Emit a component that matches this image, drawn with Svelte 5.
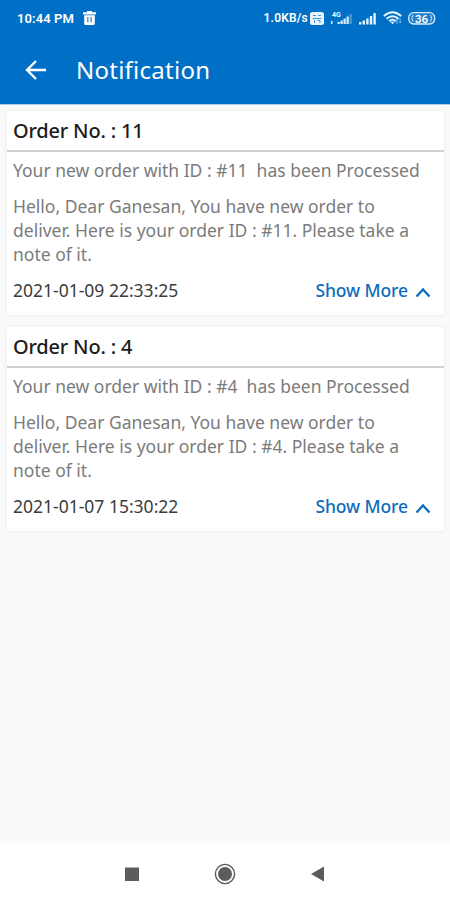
<script>
	let notifications = [
		{ id: 11, date: '2021-01-09 22:33:25' },
		{ id: 4, date: '2021-01-07 15:30:22' }
	];
</script>

<div class="screen">
	<header>
		<div class="status">
			<div class="status-left">
				<span class="clock">10:44 PM</span>
				<svg class="trash" width="13" height="14" viewBox="0 0 13 14">
					<path fill="#fff" fill-rule="evenodd" d="M4 0h5v1.2h4v2.3H0V1.2h4zM1.2 4.2h10.6v8.3q0 1.5-1.5 1.5H2.7q-1.5 0-1.5-1.5zM4.3 6v5.3h1.1V6zM7.6 6v5.3h1.1V6z" />
				</svg>
			</div>
			<div class="status-right">
				<span class="speed">1.0KB/s</span>
				<svg width="14" height="13" viewBox="0 0 14 13">
					<rect width="14" height="13" rx="2.5" fill="#e7f3fd" />
					<path fill="none" stroke="#3f95d9" d="M3 3.5h3M8 3.5h3M2.5 6.5h9M4.5 8v3M7.5 8.5H10V11" />
				</svg>
				<svg class="signal-4g" width="23" height="14" viewBox="0 0 23 14">
					<text x="1" y="5.8" font-size="7">4G</text>
					<path fill="#d9ecfb" d="M0 10h1.5v3H0zM6.5 11h2.3v2H6.5zM9.5 9.5h2.3V13H9.5zM12.5 7.5h2.3V13h-2.3zM15.5 5.5h2.3V13h-2.3z" />
					<path fill="#4a9ada" d="M18.5 3h2.3v10h-2.3z" />
				</svg>
				<svg class="signal" width="18" height="13" viewBox="0 0 18 13">
					<path fill="#e7f3fd" d="M0 10h2.4v2.5H0zM3.6 8.5H6v4H3.6zM7.2 6.5h2.4v6H7.2zM10.8 4h2.4v8.5h-2.4zM14.4 1h2.4v11.5h-2.4z" />
				</svg>
				<svg class="wifi" width="20" height="14" viewBox="0 0 20 14">
					<g fill="none" stroke="#e7f3fd" stroke-width="1.9">
						<path d="M.8 5Q9.5-2.7 18.2 5M3.5 7.8q6-5.2 12 0M6.2 10.2q3.3-3 6.6 0" />
					</g>
					<path fill="#e7f3fd" d="M7.2 10.8h4.6L9.5 13.3z" />
					<path fill="none" stroke="#8cc0e9" d="M14 8v5M12.5 9.5L14 8M17 7v5l1.5-1.5" />
				</svg>
				<svg class="battery" width="28" height="13" viewBox="0 0 28 13">
					<rect x=".7" y=".7" width="26" height="11.3" rx="5" fill="#1f80cd" stroke="#d5e9f9" stroke-width="1.3" />
					<path fill="none" stroke="#d5e9f9" d="M5 3q-2.5 3.3 0 6.6M22.5 3q2.5 3.3 0 6.6" />
					<text x="7" y="10.5" font-size="11.5">36</text>
				</svg>
			</div>
		</div>
		<div class="toolbar">
			<svg class="back" width="22" height="20" viewBox="0 0 22 20">
				<path fill="none" stroke="#fff" stroke-width="2.4" d="M21 10H2.2M11 1L2 10l9 9" />
			</svg>
			<h1>Notification</h1>
		</div>
	</header>

	<main>
		{#each notifications as item}
			<section class="card">
				<h2>Order No. : {item.id}</h2>
				<div class="content">
					<p class="summary">Your new order with ID : #{item.id}&nbsp; has been Processed</p>
					<p class="message">Hello, Dear Ganesan, You have new order to deliver. Here is your order ID : #{item.id}. Please take a note of it.</p>
					<div class="footer">
						<span class="date">{item.date}</span>
						<button>
							Show More
							<svg width="16" height="11" viewBox="0 0 16 11">
								<path fill="none" stroke="#0d6dbb" stroke-width="2.3" d="M1.5 9.5L8 2.5l6.5 7" />
							</svg>
						</button>
					</div>
				</div>
			</section>
		{/each}
	</main>

	<nav>
		<svg width="14" height="14" viewBox="0 0 14 14"><path fill="#5c5c5c" d="M0 .5h14V14H0z" /></svg>
		<svg width="22" height="22" viewBox="0 0 22 22">
			<circle cx="11" cy="11" r="9.6" fill="#fff" stroke="#5c5c5c" stroke-width="1.4" />
			<circle cx="11" cy="11" r="7" fill="#5c5c5c" />
		</svg>
		<svg width="13" height="16" viewBox="0 0 13 16"><path fill="#5c5c5c" d="M13 .5v15L0 8z" /></svg>
	</nav>
</div>

<style>
:global(body) {
	margin: 0;
}
.screen {
	display: flex;
	flex-direction: column;
	height: 900px;
	background: #fafafa;
	font-family: "Noto Sans", sans-serif;
}
header {
	height: 104px;
	background: #0070c6;
	border-bottom: 1px solid #a9cdea;
	color: #fff;
	flex: none;
}
.status {
	display: flex;
	justify-content: space-between;
	height: 36px;
	padding: 0 14px 0 17px;
	font-family: Roboto, sans-serif;
	font-weight: 600;
}
.status-left,
.status-right {
	display: flex;
	align-items: center;
}
.clock {
	font-size: 13px;
	letter-spacing: 0.1px;
}
.trash {
	margin-left: 9px;
}
.speed {
	margin-right: 2px;
	font-size: 12px;
	letter-spacing: 0.2px;
}
.signal-4g {
	margin-left: 7px;
}
.signal {
	margin-left: 5px;
}
.wifi {
	margin-left: 6px;
}
.battery {
	margin-left: 5px;
}
.status text {
	fill: #fff;
}
.toolbar {
	display: flex;
	align-items: center;
	height: 68px;
	padding-left: 25px;
}
h1 {
	margin: -1px 0 0 29px;
	font-size: 24px;
	font-weight: 400;
	letter-spacing: 0.25px;
}
main {
	flex: 1;
	display: flex;
	flex-direction: column;
	gap: 12px;
	padding: 6px 6px 0 7px;
}
.card {
	height: 204px;
	background: #fff;
	border-radius: 3px;
	box-shadow: 0 0 3px 2px #f3f3f3;
}
h2 {
	height: 39px;
	margin: 0;
	padding-left: 6px;
	border-bottom: 2px solid #d2d2d2;
	color: #1c1c1c;
	font-size: 20px;
	font-weight: 500;
	line-height: 40px;
	letter-spacing: -0.2px;
}
.content {
	padding: 6px 6px 0;
	font-size: 17.5px;
	line-height: 24px;
}
p {
	margin: 0;
	color: #7b7b7b;
}
.message {
	margin-top: 12px;
	padding-right: 20px;
}
.footer {
	display: flex;
	justify-content: space-between;
	margin-top: 12px;
}
.date {
	color: #3c3c3c;
}
button {
	display: flex;
	align-items: center;
	gap: 7px;
	padding: 0 7px 0 0;
	border: 0;
	background: none;
	color: #0d6dbb;
	font: inherit;
	font-weight: 500;
	letter-spacing: -0.1px;
}
button svg {
	margin-top: 5px;
}
nav {
	display: flex;
	align-items: center;
	height: 53px;
	padding: 3px 126px 0 125px;
	justify-content: space-between;
	background: #fff;
}
</style>
